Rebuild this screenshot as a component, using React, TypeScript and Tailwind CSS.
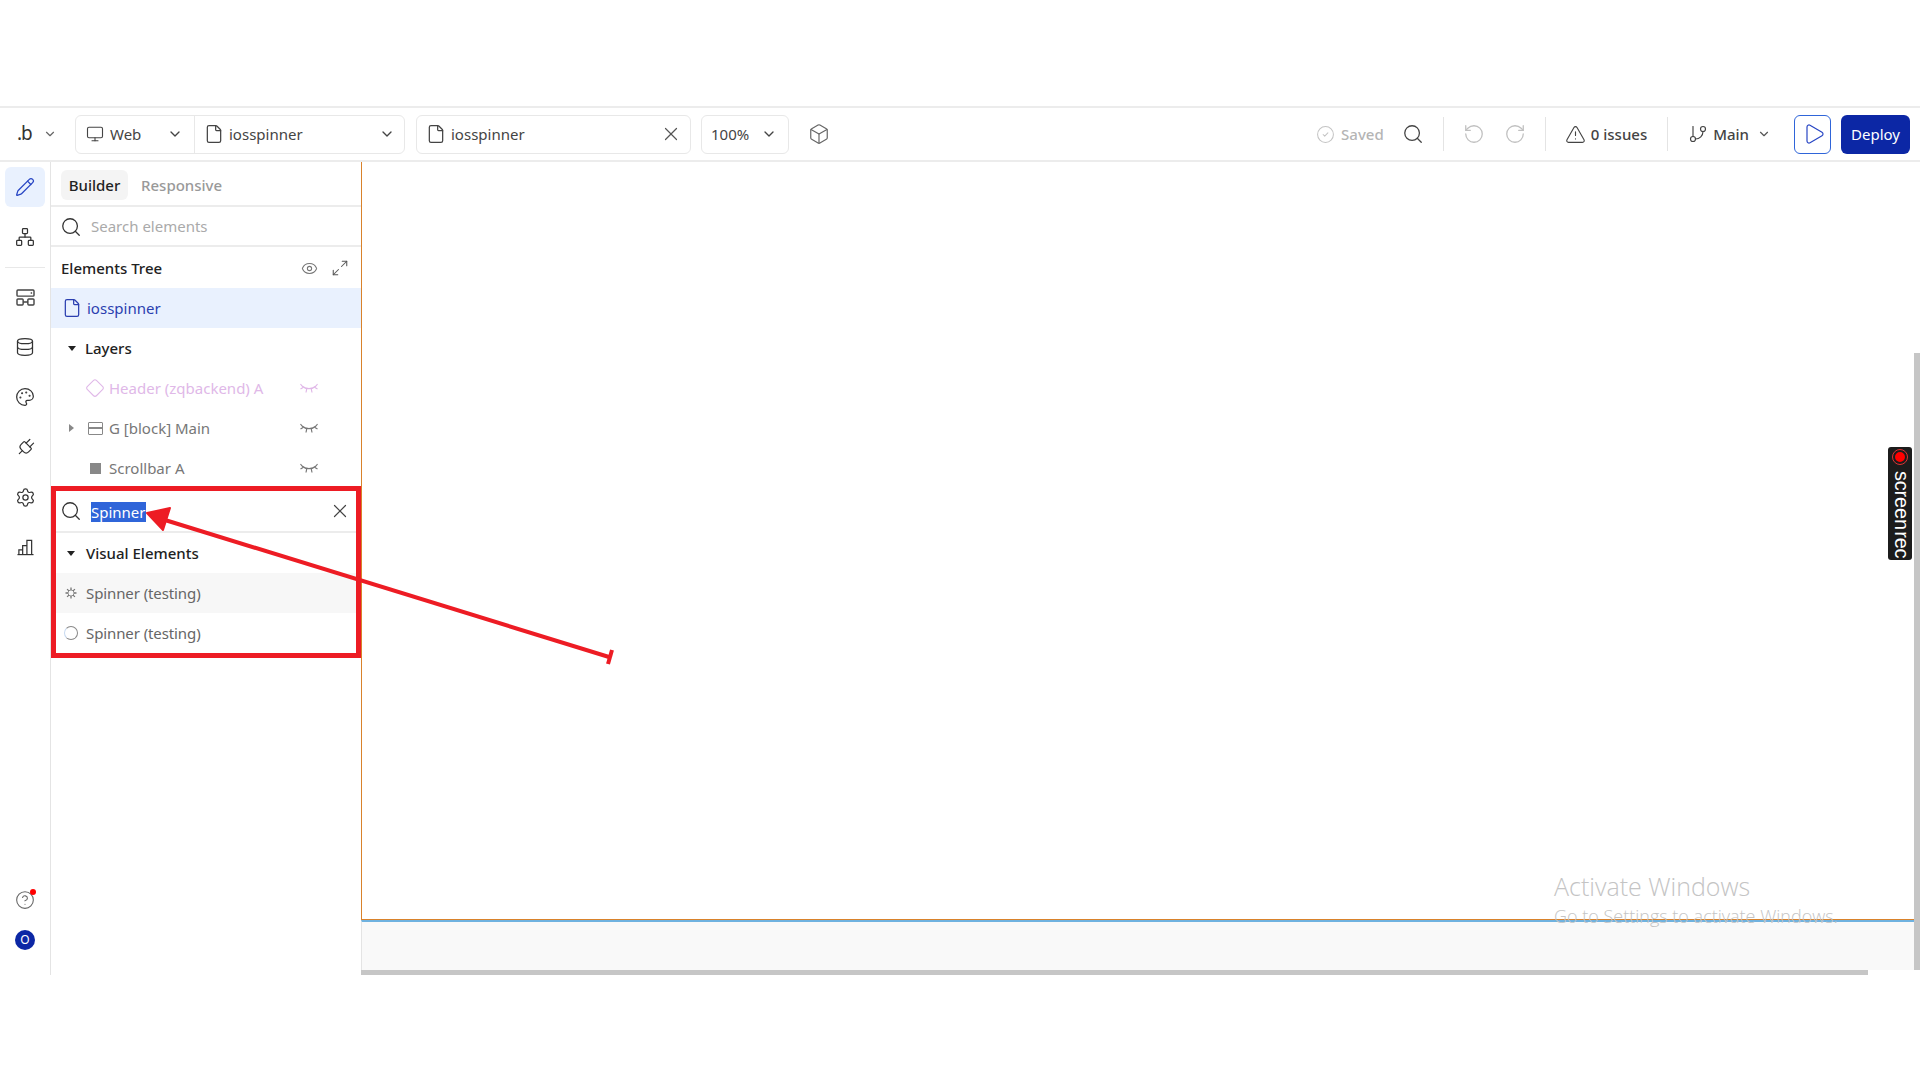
import {
  ChevronDown,
  CircleCheck,
  CircleHelp,
  Database,
  Diamond,
  Eye,
  File,
  GitBranch,
  Maximize2,
  Monitor,
  Network,
  Palette,
  Pencil,
  Play,
  Plug,
  RotateCcw,
  RotateCw,
  Search,
  Settings,
  Box,
  TriangleAlert,
  X,
} from 'lucide-react';
import type { ReactNode } from 'react';

function ClosedEye({ className }: { className?: string }) {
  return (
    <svg viewBox="0 0 18 11" fill="none" stroke="currentColor" strokeWidth="1.200" className={className}>
      <path d="M2 3C5.500 6.500 12.500 6.500 16 3" />
      <path d="M0.500 1L2 3M0.500 6L3.500 4.200M6 9.500L6.800 5.500M12 9.500L11.200 5.500M17.500 6L14.500 4.200M17.500 1L16 3" />
    </svg>
  );
}

function BlocksIcon() {
  return (
    <svg viewBox="0 0 20 18" fill="none" stroke="currentColor" strokeWidth="1.500" className="w-[19px] h-[17px] text-[#444]">
      <rect x="1" y="1" width="18" height="6.500" rx="1" />
      <rect x="1" y="10.500" width="6.500" height="6.500" rx="1" />
      <rect x="12.500" y="10.500" width="6.500" height="6.500" rx="1" />
      <path d="M7.500 13.750h5M15.500 4.200h1.500" />
    </svg>
  );
}

function ChartBars() {
  return (
    <svg viewBox="0 0 18 17" fill="none" stroke="currentColor" strokeWidth="1.300" className="w-[17px] h-[17px]">
      <path d="M0.500 16h17" />
      <path d="M2 16v-5h4v5M6 16V6.500h4.500V16M10.500 16V1h5v15" />
    </svg>
  );
}

function SpinnerGear() {
  return (
    <svg viewBox="0 0 12 12" fill="none" stroke="#777" strokeWidth="1.300" className="w-3 h-3">
      <path d="M6 0.500v2.500M6 9v2.500M0.500 6h2.500M9 6h2.500M2.100 2.100l1.800 1.800M8.100 8.100l1.800 1.800M9.900 2.100L8.100 3.900M3.900 8.100l-1.800 1.800" />
      <circle cx="6" cy="6" r="3" strokeWidth="0.800" />
    </svg>
  );
}

function RailButton({ children, active }: { children: ReactNode; active?: boolean }) {
  return (
    <div className={`w-10 h-10 ml-[5px] rounded-md flex items-center justify-center text-[#333] ${active ? 'bg-[#e9f1fe]' : ''}`}>
      {children}
    </div>
  );
}

function LayerRow({
  arrow,
  icon,
  label,
  pink,
}: {
  arrow?: boolean;
  icon: ReactNode;
  label: string;
  pink?: boolean;
}) {
  return (
    <div className={`h-10 flex items-center pl-[18px] ${pink ? 'text-[#e0b8e8]' : 'text-[#777]'}`}>
      <div className="w-[40px] flex items-center">
        <span className="w-[16px] h-[10px] flex items-center">
          {arrow && <span className="w-0 h-0 border-y-[4px] border-y-transparent border-l-[5px] border-l-[#888]" />}
        </span>
        <span className="w-[20px] flex justify-center">{icon}</span>
      </div>
      <span className="w-[191px] truncate">{label}</span>
      <ClosedEye className="w-[18px] h-[11px]" />
    </div>
  );
}

function Toolbar() {
  return (
    <div className="h-[56px] flex items-center border-t-2 border-b-2 border-[#ececec] text-[#444] bg-white">
      <div className="w-[75px] flex items-center pl-[17px]">
        <span className="w-[26px] text-[19px] leading-none tracking-[-1px] text-[#333] -mt-[2px]">.b</span>
        <ChevronDown className="w-[14px] h-[14px] text-[#666]" />
      </div>
      <div className="w-[330px] h-[39px] flex border border-[#e8e8e8] rounded-md">
        <div className="w-[119px] flex items-center pl-[10px] border-r border-[#e8e8e8]">
          <Monitor className="w-[18px] h-[18px] text-[#444]" strokeWidth={1.500} />
          <span className="ml-[6px] flex-1">Web</span>
          <ChevronDown className="w-4 h-4 mr-[11px]" />
        </div>
        <div className="flex-1 flex items-center pl-[9px]">
          <File className="w-5 h-5" strokeWidth={1.500} />
          <span className="ml-[5px] flex-1">iosspinner</span>
          <ChevronDown className="w-4 h-4 mr-[9px]" />
        </div>
      </div>
      <div className="w-[275px] h-[39px] ml-[11px] flex items-center pl-[9px] border border-[#e8e8e8] rounded-md">
        <File className="w-5 h-5" strokeWidth={1.500} />
        <span className="ml-[5px] flex-1">iosspinner</span>
        <X className="w-[22px] h-[22px] mr-[8px] text-[#555]" strokeWidth={1.300} />
      </div>
      <div className="w-[88px] h-[39px] ml-[10px] flex items-center pl-[9px] border border-[#e8e8e8] rounded-md">
        <span className="flex-1">100%</span>
        <ChevronDown className="w-4 h-4 mr-[11px]" />
      </div>
      <Box className="w-[22px] h-[22px] ml-[19px] text-[#666]" strokeWidth={1.300} />
      <div className="flex-1" />
      <CircleCheck className="w-[19px] h-[19px] text-[#c4c4c4]" strokeWidth={1.300} />
      <span className="ml-[6px] text-[#b5b5b5] font-medium">Saved</span>
      <Search className="w-[22px] h-[22px] ml-[18px] text-[#444]" strokeWidth={1.400} />
      <div className="w-px h-[34px] ml-[19px] bg-[#e4e4e4]" />
      <RotateCcw className="w-[22px] h-[22px] ml-[19px] text-[#c0c0c0]" strokeWidth={1.400} />
      <RotateCw className="w-[22px] h-[22px] ml-[19px] text-[#c0c0c0]" strokeWidth={1.400} />
      <div className="w-px h-[34px] ml-[19px] bg-[#e4e4e4]" />
      <TriangleAlert className="w-[21px] h-[21px] ml-[19px] text-[#444]" strokeWidth={1.300} />
      <span className="ml-[5px] font-medium">0 issues</span>
      <div className="w-px h-[34px] ml-[20px] bg-[#e4e4e4]" />
      <GitBranch className="w-5 h-5 ml-[20px] text-[#444]" strokeWidth={1.400} />
      <span className="ml-[5px] font-medium">Main</span>
      <ChevronDown className="w-[14px] h-[14px] ml-[8px] text-[#555]" />
      <div className="w-[37px] h-[39px] ml-[23px] flex items-center justify-center rounded-md border border-[#2f65d9]">
        <Play className="w-6 h-6 ml-[2px] text-[#2745c4]" strokeWidth={1.200} />
      </div>
      <div className="w-[69px] h-[39px] ml-[10px] mr-[10px] flex items-center justify-center rounded-md bg-[#0c27a5] text-white">
        Deploy
      </div>
    </div>
  );
}

function Rail() {
  const icon = 'w-5 h-5';
  return (
    <div className="w-[51px] shrink-0 border-r border-[#e4e4e4] flex flex-col pt-[5px]">
      <RailButton active>
        <Pencil className={`${icon} text-[#2745c4]`} strokeWidth={1.500} />
      </RailButton>
      <div className="h-[10px]" />
      <RailButton>
        <Network className={icon} strokeWidth={1.500} />
      </RailButton>
      <div className="w-10 ml-[5px] h-px bg-[#e8e8e8] mt-[10px] mb-[9px]" />
      <div className="flex flex-col gap-[10px]">
        <RailButton>
          <BlocksIcon />
        </RailButton>
        <RailButton>
          <Database className={icon} strokeWidth={1.500} />
        </RailButton>
        <RailButton>
          <Palette className={icon} strokeWidth={1.500} />
        </RailButton>
        <RailButton>
          <Plug className="w-[21px] h-[21px] rotate-45" strokeWidth={1.400} />
        </RailButton>
        <RailButton>
          <Settings className="w-[21px] h-[21px]" strokeWidth={1.400} />
        </RailButton>
        <RailButton>
          <ChartBars />
        </RailButton>
      </div>
      <div className="flex-1" />
      <div className="relative ml-[15px] w-5 mb-[20px] text-[#666]">
        <CircleHelp className="w-5 h-5" strokeWidth={1.300} />
        <span className="absolute -top-[1px] -right-[1px] w-[6px] h-[6px] rounded-full bg-[#f00]" />
      </div>
      <div className="w-5 h-5 ml-[15px] mb-[25px] rounded-full bg-[#0c27a5] text-white text-[12px] leading-5 text-center">
        O
      </div>
    </div>
  );
}

function Panel() {
  return (
    <div className="w-[310px] shrink-0 relative">
      <div className="h-[45px] flex items-center pl-[10px] pt-[2px] border-b-2 border-[#ececec] font-medium">
        <div className="w-[67px] h-[30px] rounded-md bg-[#f4f4f4] flex items-center justify-center pt-[1px] text-[#222]">Builder</div>
        <span className="ml-[13px] pt-[1px] text-[#999]">Responsive</span>
      </div>
      <div className="h-[40px] flex items-center pl-[9px] pt-[1px] border-b-2 border-[#ececec]">
        <Search className="w-[22px] h-[22px] text-[#333]" strokeWidth={1.400} />
        <span className="ml-[9px] text-[#aaa]">Search elements</span>
      </div>
      <div className="h-[41px] flex items-center pl-[10px] pt-[1px] text-[#222] font-medium">
        <span className="flex-1">Elements Tree</span>
        <Eye className="w-[17px] h-[17px] text-[#777] mr-[13px]" strokeWidth={1.500} />
        <Maximize2 className="w-[18px] h-[18px] text-[#555] mr-[12px]" strokeWidth={1.400} />
      </div>
      <div className="h-10 flex items-center pl-[11px] bg-[#e9f1fe] text-[#2b3fb0]">
        <File className="w-5 h-5" strokeWidth={1.500} />
        <span className="ml-[5px]">iosspinner</span>
      </div>
      <div className="h-10 flex items-center pl-[17px] text-[#222] font-medium">
        <span className="w-0 h-0 border-x-[4px] border-x-transparent border-t-[5px] border-t-[#222]" />
        <span className="ml-[9px]">Layers</span>
      </div>
      <LayerRow pink label="Header (zqbackend) A" icon={<Diamond className="w-5 h-5" strokeWidth={1.300} />} />
      <LayerRow
        arrow
        label="G [block] Main"
        icon={
          <span className="w-[15px] h-[13px] border-[1.500px] border-[#888] rounded-[1px] flex flex-col justify-center">
            <span className="h-[1.500px] bg-[#888]" />
          </span>
        }
      />
      <LayerRow label="Scrollbar A" icon={<span className="w-[11px] h-[11px] bg-[#888]" />} />
      <div className="absolute left-0 top-[324px] w-[310px] h-[172px] border-[5px] border-[#ed1c24] bg-white">
        <div className="h-[42px] flex items-center pl-[4px] border-b-2 border-[#ececec] text-[#333]">
          <Search className="w-[22px] h-[22px]" strokeWidth={1.400} />
          <span className="ml-[9px] h-5 leading-5 mt-[1px] bg-[#2f65d9] text-white">Spinner</span>
          <span className="flex-1" />
          <X className="w-[22px] h-[22px] mr-[5px] text-[#444]" strokeWidth={1.300} />
        </div>
        <div className="h-10 flex items-center pl-[11px] text-[#222] font-medium">
          <span className="w-0 h-0 border-x-[4px] border-x-transparent border-t-[5px] border-t-[#222]" />
          <span className="ml-[11px]">Visual Elements</span>
        </div>
        <div className="h-10 flex items-center pl-[9px] bg-[#f7f7f7] text-[#666]">
          <SpinnerGear />
          <span className="ml-[9px] tracking-[-0.100px]">Spinner (testing)</span>
        </div>
        <div className="h-10 flex items-center pl-[8px] text-[#666]">
          <span className="w-[14px] h-[14px] rounded-full border border-[#888] border-l-[#c5d8f0]" />
          <span className="ml-[8px] tracking-[-0.100px]">Spinner (testing)</span>
        </div>
      </div>
    </div>
  );
}

function Canvas() {
  return (
    <div className="flex-1 flex flex-col relative">
      <div className="flex-1 flex">
        <div className="flex-1 flex flex-col">
          <div className="flex-1 border-b border-l border-[#d9822b]" />
          <div className="h-[50px] border-t-2 border-[#6fb2e0] bg-[#f9f9f9] border-l border-l-[#e4e4e4]" />
        </div>
        <div className="w-[6px] flex flex-col">
          <div className="h-[191px]" />
          <div className="flex-1 bg-[#c6c6c6]" />
        </div>
      </div>
      <div className="h-[5px] w-[1507px] bg-[#c6c6c6]" />
      <div className="absolute left-[1193px] top-[712px] text-[#c4c4c4] font-light leading-none font-['Open_Sans',sans-serif]">
        <div className="text-[25px]">Activate Windows</div>
        <div className="text-[18px] mt-[8px]">Go to Settings to activate Windows.</div>
      </div>
      <div className="absolute right-[8px] top-[285px] w-6 h-[113px] rounded-[3px] bg-[#1c1c1c] flex flex-col items-center text-white pt-[3px]">
        <span className="w-[14px] h-[14px] rounded-full bg-[#f00] border-2 border-[#1c1c1c] outline outline-1 outline-[#d33]" />
        <span className="[writing-mode:vertical-rl] text-[20px] leading-6 font-['Liberation_Sans',sans-serif] tracking-[-0.200px] [word-spacing:-4px] mt-[7px] ml-[3px]">screen rec</span>
      </div>
    </div>
  );
}

export default function App() {
  return (
    <div className="w-[1920px] h-[1080px] overflow-hidden bg-white pt-[106px] relative text-[15px] font-['Noto_Sans',sans-serif]">
      <Toolbar />
      <div className="h-[813px] flex">
        <Rail />
        <Panel />
        <Canvas />
      </div>
      <svg viewBox="0 0 1920 1080" className="absolute inset-0 w-[1920px] h-[1080px] pointer-events-none">
        <path d="M609 657L165 520" stroke="#ed1c24" strokeWidth="4" fill="none" />
        <path d="M147 513L170 508L163 530Z" fill="#ed1c24" stroke="#ed1c24" strokeWidth="2" strokeLinejoin="round" />
        <path d="M612 650L608 664" stroke="#ed1c24" strokeWidth="4" />
      </svg>
    </div>
  );
}
